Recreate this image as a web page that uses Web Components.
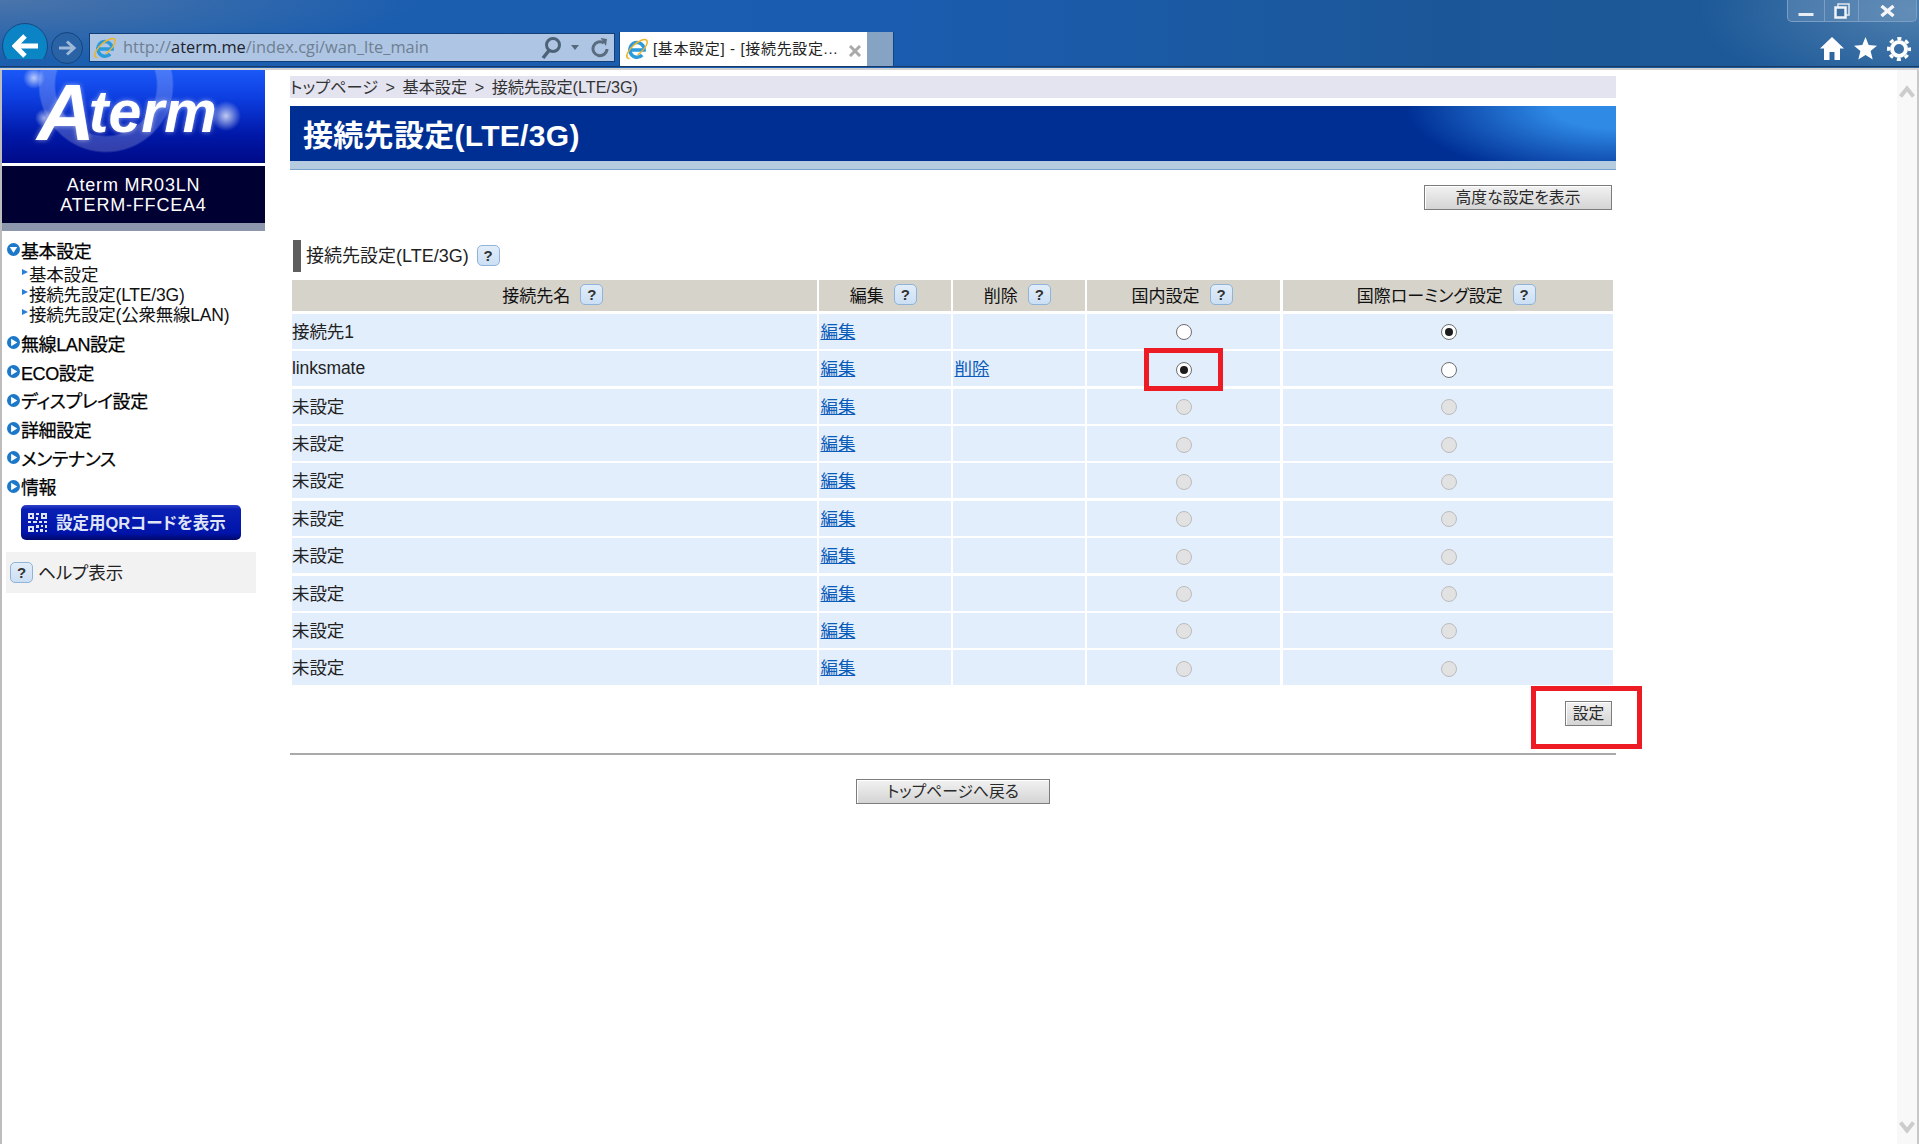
<!DOCTYPE html>
<html lang="ja">
<head>
<meta charset="utf-8">
<title>接続先設定(LTE/3G)</title>
<style>
  html, body { margin: 0; padding: 0; background: #fff; }
  body {
    width: 1919px; height: 1144px; overflow: hidden;
    font-family: "Liberation Sans", "Noto Sans CJK JP", sans-serif;
    font-feature-settings: "palt";
    color: #222;
  }
</style>
</head>
<body>
<ie-chrome></ie-chrome>
<aterm-page>
  <side-menu slot="side">
    <menu-item open>基本設定</menu-item>
    <sub-list>
      <sub-item>基本設定</sub-item>
      <sub-item>接続先設定(LTE/3G)</sub-item>
      <sub-item>接続先設定(公衆無線LAN)</sub-item>
    </sub-list>
    <menu-item>無線LAN設定</menu-item>
    <menu-item>ECO設定</menu-item>
    <menu-item>ディスプレイ設定</menu-item>
    <menu-item>詳細設定</menu-item>
    <menu-item>メンテナンス</menu-item>
    <menu-item>情報</menu-item>
  </side-menu>
  <main-pane>
    <crumb-bar>トップページ &gt; 基本設定 &gt; 接続先設定(LTE/3G)</crumb-bar>
    <title-bar>接続先設定(LTE/3G)</title-bar>
    <button-row align="end" top="15"><push-button w="188">高度な設定を表示</push-button></button-row>
    <section-head>接続先設定(LTE/3G)</section-head>
    <conn-table>
      <conn-head></conn-head>
      <conn-row intl="on">接続先1</conn-row>
      <conn-row latin del dom="on" intl="off">linksmate</conn-row>
      <conn-row dom="dis" intl="dis">未設定</conn-row>
      <conn-row dom="dis" intl="dis">未設定</conn-row>
      <conn-row dom="dis" intl="dis">未設定</conn-row>
      <conn-row dom="dis" intl="dis">未設定</conn-row>
      <conn-row dom="dis" intl="dis">未設定</conn-row>
      <conn-row dom="dis" intl="dis">未設定</conn-row>
      <conn-row dom="dis" intl="dis">未設定</conn-row>
      <conn-row dom="dis" intl="dis">未設定</conn-row>
    </conn-table>
    <button-row align="end" top="16"><push-button w="47">設定</push-button></button-row>
    <rule-line></rule-line>
    <button-row align="center" top="24"><push-button w="194">トップページへ戻る</push-button></button-row>
    <red-mark style="left:854px;top:278px;width:79px;height:43px"></red-mark>
    <red-mark style="left:1241px;top:616px;width:111px;height:63px"></red-mark>
  </main-pane>
</aterm-page>

<script>
// small base class, every element just sets tmpl
class Base extends HTMLElement {
  connectedCallback() {
    if (this.shadowRoot) return
    let frag = document.createRange().createContextualFragment(this.tmpl())
    this.attachShadow({ mode: 'open' }).appendChild(frag)
  }
}

const ieLogo = `<svg viewBox="0 0 24 24" width="24" height="24" style="overflow:visible">
  <path d="M4.600 13h14.600a7.200 7.400 0 1 0-2 5" fill="none" stroke="#2b9bdc" stroke-width="3.400"/>
  <ellipse cx="12" cy="12" rx="13" ry="5" transform="rotate(-42 12 12)" fill="none" stroke="#efb32c" stroke-width="1.500" stroke-dasharray="30 9 40" stroke-dashoffset="12"/>
</svg>`

class IeChrome extends Base {
  tmpl() { return `
  <style>
    :host { display: flex; flex-direction: column; height: 70px; box-sizing: border-box;
      border-bottom: 2px solid #d2d2d2;
      background:
        radial-gradient(ellipse 420px 60px at 0 0, #4a74aa 0, rgba(74,116,170,0) 100%),
        radial-gradient(ellipse 220px 90px at 1919px 10px, #4f7fae 0, rgba(79,127,174,0) 100%),
        linear-gradient(90deg, #1c5fae 0, #1a5cb0 45%, #1b5798 75%, #1d5a98 100%); }
    .top { height: 32px; display: flex; justify-content: flex-end; padding-right: 2px; flex: none; }
    .win { display: flex; height: 22px; box-sizing: border-box; border: 1px solid #7c9ec4; border-top: 0;
      border-radius: 0 0 5px 5px; background: rgba(255,255,255,.12); }
    .win div { display: flex; align-items: center; justify-content: center; height: 100%; }
    .win div + div { border-left: 1px solid #7c9ec4; }
    .row { height: 34px; display: flex; align-items: flex-start; position: relative;
      border-bottom: 1px solid #183c66; flex: none; padding-left: 2px; }
    .back { width: 46px; height: 46px; margin-top: -9px; flex: none; border-radius: 50%; box-sizing: border-box;
      border: 1px solid #134b80; background: linear-gradient(#0b82c6, #0a88c4); display: flex; align-items: center; justify-content: center;
      clip-path: inset(0 0 10px 0); }
    .fwd { width: 32px; height: 32px; margin: 0 0 0 3px; flex: none; border-radius: 50%; box-sizing: border-box;
      border: 1px solid #13457f; background: #2a62a6; display: flex; align-items: center; justify-content: center; }
    .addr { width: 526px; height: 29px; margin: 1px 0 0 6px; flex: none; box-sizing: border-box;
      border: 1px solid #123f78; background: #aec6e4; display: flex; align-items: center; padding-left: 3px; }
    .url { font: 16.400px "Open Sans", "Noto Sans", sans-serif; color: #6f7f92; margin: -2px 0 0 6px; flex: 1; white-space: nowrap; }
    .url b { font-weight: 400; color: #20242c; }
    .addr svg { flex: none; }
    .tab { width: 248px; height: 34px; margin-left: 4px; flex: none; box-sizing: border-box; background: #fff;
      border-left: 1px solid #0f4688; display: flex; align-items: center; padding-left: 5px; }
    .tab span { font-size: 15px; color: #222; margin: -4px 0 0 4px; flex: 1; white-space: nowrap; letter-spacing: .65px; }
    .stub { width: 27px; height: 34px; flex: none; background: #87a3c4; border-right: 1px solid #0f4688; box-sizing: border-box; }
    .tools { margin-left: auto; display: flex; gap: 10px; padding: 5px 8px 0 0; }
  </style>
  <div class="top"><div class="win">
    <div style="width:36px"><svg width="16" height="22" viewBox="0 0 16 22"><rect x="0.500" y="13" width="15" height="3" fill="#e8edf3"/></svg></div>
    <div style="width:33px"><svg width="18" height="18" viewBox="0 0 18 18"><rect x="5" y="2" width="11" height="11" fill="none" stroke="#dfe6ee" stroke-width="1.500"/><rect x="2.500" y="5.500" width="10" height="10" fill="#3d6fa3" stroke="#f0f3f7" stroke-width="2.500"/></svg></div>
    <div style="width:57px"><svg width="15" height="12" viewBox="0 0 15 12"><path d="M1.500 1l12 10M13.500 1l-12 10" stroke="#f4f6f9" stroke-width="3.400"/></svg></div>
  </div></div>
  <div class="row">
    <div class="back"><svg width="26" height="24" viewBox="0 0 26 24"><path d="M13 2L3 12l10 10M3 12h23" fill="none" stroke="#fff" stroke-width="5"/></svg></div>
    <div class="fwd"><svg width="18" height="16" viewBox="0 0 18 16"><path d="M9 1.500L16 8l-7 6.500M16 8H1" fill="none" stroke="#9db8d8" stroke-width="3"/></svg></div>
    <div class="addr">
      ${ieLogo}
      <div class="url">http://<b>aterm.me</b>/index.cgi/wan_lte_main</div>
      <svg width="22" height="24" viewBox="0 0 22 24" style="margin-right:9px"><circle cx="13" cy="9" r="6.500" fill="none" stroke="#4c6277" stroke-width="3"/><path d="M9 14.500L3 22" stroke="#4c6277" stroke-width="3.500"/></svg>
      <svg width="8" height="5" viewBox="0 0 8 5" style="margin-right:12px"><path d="M0 0h8L4 5z" fill="#56697c"/></svg>
      <svg width="18" height="22" viewBox="0 0 18 22" style="margin-right:5px"><path d="M13 6a7 7 0 1 0 3 6" fill="none" stroke="#5a6d80" stroke-width="3"/><path d="M9.500 1l6.500 1-1 7z" fill="#5a6d80"/></svg>
    </div>
    <div class="tab">${ieLogo}<span>[基本設定] - [接続先設定...</span>
      <svg width="14" height="12" viewBox="0 0 14 12" style="margin:3px 5px 0 0"><path d="M2 1l10 10M12 1L2 11" stroke="#aaa" stroke-width="3"/></svg></div>
    <div class="stub"></div>
    <div class="tools">
      <svg width="24" height="23" viewBox="0 0 24 23"><path d="M12 0l12 11.500h-4V23h-5.500v-8h-5v8H4V11.500H0z" fill="#fff"/></svg>
      <svg width="23" height="23" viewBox="0 0 24 24"><path d="M12 0l3.300 8.400 8.700.6-6.700 5.700 2.200 8.800L12 18.700 4.500 23.500l2.200-8.800L0 9l8.700-.6z" fill="#fff"/></svg>
      <svg width="24" height="24" viewBox="0 0 24 24"><circle cx="12" cy="12" r="7" fill="none" stroke="#fff" stroke-width="4"/><circle cx="12" cy="12" r="10.500" fill="none" stroke="#fff" stroke-width="3" stroke-dasharray="4.120 4.120" stroke-dashoffset="2"/></svg>
    </div>
  </div>` }
}

class AtermPage extends Base {
  tmpl() { return `
  <style>
    :host { display: flex; height: 1074px; }
    .side { width: 263px; flex: none; border-left: 2px solid #bdbdbd; }
    .main { width: 1326px; margin-left: 25px; flex: none; }
    .fill { flex: 1; }
    .bar { width: 20px; flex: none; background: #f8f8f8; display: flex; flex-direction: column; justify-content: space-between; align-items: center; padding: 15px 0 10px 0; box-sizing: content-box; }
    .edge { width: 2px; flex: none; background: #c8c8c8; }
    svg { display: block; }
  </style>
  <div class="side"><slot name="side"></slot></div>
  <div class="main"><slot></slot></div>
  <div class="fill"></div>
  <div class="bar">
    <svg width="16" height="13" viewBox="0 0 16 13"><path d="M1.500 11.500L8 3.500l6.500 8" fill="none" stroke="#ccc" stroke-width="4"/></svg>
    <svg width="16" height="13" viewBox="0 0 16 13"><path d="M1.500 1.500L8 9.500l6.500-8" fill="none" stroke="#ccc" stroke-width="4"/></svg>
  </div>
  <div class="edge"></div>` }
}

class SideMenu extends Base {
  tmpl() { return `
  <style>
    :host { display: block; }
    .logo { height: 93px; display: flex; align-items: flex-end; padding: 0 0 21px 35px; box-sizing: border-box;
      color: #fff; font: italic bold 59px/1 "Liberation Sans", sans-serif; letter-spacing: 0;
      text-shadow: 0 0 5px rgba(255,255,255,.55);
      background:
        radial-gradient(circle at 32px 8px, rgba(255,255,255,.7) 0, rgba(255,255,255,0) 11px),
        radial-gradient(circle at 42px 48px, rgba(255,255,255,.6) 0, rgba(255,255,255,0) 9px),
        radial-gradient(circle at 224px 46px, rgba(255,255,255,.75) 0, rgba(255,255,255,0) 15px),
        radial-gradient(circle at 104px 15px, rgba(255,255,255,0) 50px, rgba(255,255,255,.2) 52px, rgba(255,255,255,.2) 66px, rgba(255,255,255,0) 68px),
        linear-gradient(#1b58f8 0, #0d3ee0 30%, #0018a8 70%, #000a88 100%); }
    .logo span { font-size: 80px; letter-spacing: -6px; line-height: 59px; }
    .model { height: 57px; margin-top: 3px; background: #000033; color: #fff; box-sizing: border-box; padding-top: 10px;
      text-align: center; font-size: 18px; line-height: 19.500px; letter-spacing: .8px; white-space: nowrap; }
    .band { height: 8px; background: #8c97ae; }
    .items { padding-top: 4.200px; }
    .qr { margin: 4.400px 0 0 19px; width: 220px; height: 35px; box-sizing: border-box; border-radius: 5px;
      background: linear-gradient(#3344c8 0, #0a1fb4 12%, #0014aa 80%, #00086a 100%);
      display: flex; align-items: center; padding-left: 7px; color: #dfe4f6; font-size: 16.500px; font-weight: bold; gap: 9px; white-space: nowrap; }
    .qr span { margin-top: -2px; }
    .help { margin: 12px 0 0 4px; width: 250px; height: 41px; background: #f2f2f2; display: flex; align-items: center;
      padding-left: 4px; box-sizing: border-box; gap: 5px; font-size: 17.500px; color: #222; }
    .help span { margin-top: -2px; }
  </style>
  <div class="logo"><span>A</span>term</div>
  <div class="model">Aterm MR03LN<br>ATERM-FFCEA4</div>
  <div class="band"></div>
  <div class="items"><slot></slot></div>
  <div class="qr">
    <svg width="19" height="19" viewBox="0 0 19 19" fill="#dfe4f6"><path d="M0 0h6v6H0zM2 2v2h2V2zM13 0h6v6h-6zM15 2v2h2V2zM0 13h6v6H0zM2 15v2h2v-2zM8 0h3v2H8zM8 4h2v3H8zM0 8h3v2H0zM5 8h4v2H5zM11 8h3v2h-3zM16 8h3v2h-3zM8 12h3v3H8zM13 12h2v2h-2zM17 12h2v3h-2zM8 17h2v2H8zM12 16h3v3h-3zM17 17h2v2h-2z"/></svg>
    <span>設定用QRコードを表示</span>
  </div>
  <div class="help"><help-icon></help-icon><span>ヘルプ表示</span></div>` }
}

class MenuItem extends Base {
  tmpl() {
    let tri = this.hasAttribute('open')
      ? '<path d="M2.500 3.800h7L6 9z" fill="#fff"/>'
      : '<path d="M3.800 2.500L9.500 6l-5.700 3.500z" fill="#fff"/>'
    return `
  <style>
    :host { display: flex; align-items: center; height: 28.700px; padding-left: 4.500px; color: #000; font-size: 18px; letter-spacing: -.4px;
      -webkit-text-stroke: .25px #000; white-space: nowrap; }
    svg { margin-right: 1.500px; flex: none; }
  </style>
  <svg width="13" height="13" viewBox="0 0 12 12"><circle cx="6" cy="6" r="6" fill="#1c78c8"/>${tri}</svg><slot></slot>`
  }
}

class SubList extends Base {
  tmpl() { return `<style>:host { display: block; margin-bottom: 4.700px; }</style><slot></slot>` }
}

class SubItem extends Base {
  tmpl() { return `
  <style>
    :host { display: flex; align-items: center; height: 20px; padding-left: 20px; color: #111; font-size: 17.500px; white-space: nowrap; letter-spacing: -.2px; }
    i { width: 0; height: 0; border-left: 6px solid #2a80d8; border-top: 3.500px solid transparent; border-bottom: 3.500px solid transparent; margin: -4px 1px 0 0; }
  </style><i></i><slot></slot>` }
}

class HelpIcon extends Base {
  tmpl() { return `
  <style>
    :host { display: inline-flex; width: 23px; height: 21px; box-sizing: border-box; align-items: center; justify-content: center; flex: none;
      background: linear-gradient(#e2edf9, #cbdff4); border: 1.500px solid #90b3da; border-radius: 5px;
      font: bold 15px "Liberation Sans", sans-serif; color: #333; -webkit-text-stroke: 0; letter-spacing: 0; }
  </style>?` }
}

class MainPane extends Base {
  tmpl() { return `<style>:host { display: block; position: relative; padding-top: 6px; }</style><slot></slot>` }
}

class CrumbBar extends Base {
  tmpl() { return `
  <style>:host { display: flex; align-items: center; height: 22px; box-sizing: border-box; padding-bottom: 2px; background: #e4e4f0; color: #333; font-size: 16.200px; white-space: nowrap; word-spacing: 3px; }</style><slot></slot>` }
}

class TitleBar extends Base {
  tmpl() { return `
  <style>
    :host { display: block; margin-top: 8px; }
    .t { height: 55px; box-sizing: border-box; padding: 0 0 2px 13px; display: flex; align-items: center; color: #fff;
      font-size: 30px; font-weight: bold; white-space: nowrap; letter-spacing: .3px;
      background:
        radial-gradient(ellipse 210px 75px at 100% 0, #2f8ae6 0, #2f8ae6 30%, rgba(47,138,230,0) 100%),
        #002f94; }
    .b { height: 8px; background: #b5cce0; border-bottom: 1px solid #7da2cc; box-sizing: content-box; }
  </style>
  <div class="t"><slot></slot></div><div class="b"></div>` }
}

class ButtonRow extends Base {
  tmpl() {
    let a = this.getAttribute('align') == 'center' ? 'center' : 'flex-end'
    let pad = a == 'center' ? 0 : 4
    return `<style>:host { display: flex; justify-content: ${a}; padding-right: ${pad}px; margin-top: ${this.getAttribute('top')}px; }</style><slot></slot>`
  }
}

class PushButton extends Base {
  tmpl() { return `
  <style>
    :host { display: flex; width: ${this.getAttribute('w')}px; box-sizing: border-box; height: 25px; align-items: center; justify-content: center;
      border: 1.500px solid #7c7c7c; background: linear-gradient(#f2f2f2, #d4d4d4); box-shadow: inset 1px 1px 0 #fff;
      color: #2a2a2a; font-size: 15.800px; white-space: nowrap; padding-bottom: 2.500px; }
  </style><slot></slot>` }
}

class SectionHead extends Base {
  tmpl() { return `
  <style>
    :host { display: flex; align-items: center; margin: 30px 0 8px 3px; height: 32px; color: #222; font-size: 18px; white-space: nowrap; }
    i { width: 8px; height: 32px; background: #5e5e5e; margin-right: 5px; flex: none; }
    span { margin-top: -4px; }
    help-icon { margin: -2px 0 0 8px; }
  </style><i></i><span><slot></slot></span><help-icon></help-icon>` }
}

class ConnTable extends Base {
  tmpl() { return `
  <style>
    :host { display: grid; margin-left: 2px; width: 1321px; row-gap: 2.450px;
      --cols: 524.500px 131.500px 131.500px 193px 330.500px; }
  </style><slot></slot>` }
}

class ConnHead extends Base {
  tmpl() {
    let names = ['接続先名', '編集', '削除', '国内設定', '国際ローミング設定']
    let cells = names.map(n => `<div>${n}<help-icon></help-icon></div>`).join('')
    return `
  <style>
    :host { display: grid; grid-template-columns: var(--cols); column-gap: 2.500px; height: 31px; margin-bottom: .5px; }
    div { background: #d6d3ca; display: flex; align-items: center; justify-content: center; gap: 10px; color: #111; font-size: 17px; white-space: nowrap; box-sizing: border-box; padding: 0 3px 2px 0; }
  </style>${cells}`
  }
}

class ConnRow extends Base {
  tmpl() {
    let del = this.hasAttribute('del') ? '<a>削除</a>' : ''
    let dom = this.getAttribute('dom') || 'off'
    let intl = this.getAttribute('intl') || 'off'
    let namePad = this.hasAttribute('latin') ? 0 : 2
    return `
  <style>
    :host { display: grid; grid-template-columns: var(--cols); column-gap: 2.500px; height: 34.950px; }
    div { background: #e3eefd; display: flex; align-items: center; color: #222; font-size: 17.500px; white-space: nowrap; letter-spacing: -.1px; box-sizing: border-box; }
    .n { padding-bottom: ${namePad}px; }
    .l { padding: 0 0 2px 1.500px; }
    .c { justify-content: center; padding-top: 2px; }
    .i { padding-left: 2px; }
    a { color: #0b5cb8; text-decoration: underline; }
  </style>
  <div class="n"><slot></slot></div>
  <div class="l"><a>編集</a></div>
  <div class="l">${del}</div>
  <div class="c"><radio-dot state="${dom}"></radio-dot></div>
  <div class="c i"><radio-dot state="${intl}"></radio-dot></div>`
  }
}

class RadioDot extends Base {
  tmpl() {
    let s = this.getAttribute('state')
    let bg = s == 'dis' ? '#e2e2e2' : '#fff'
    let bd = s == 'dis' ? '#bcbcbc' : '#6e6e6e'
    let dot = s == 'on' ? '<i></i>' : ''
    return `
  <style>
    :host { display: flex; width: 16px; height: 16px; box-sizing: border-box; border-radius: 50%; border: 1.500px solid ${bd}; background: ${bg}; align-items: center; justify-content: center; }
    i { width: 8px; height: 8px; border-radius: 50%; background: #1c1c1c; }
  </style>${dot}`
  }
}

class RuleLine extends Base {
  tmpl() { return `<style>:host { display: block; height: 2px; background: #a9a9a9; margin-top: 27px; }</style>` }
}

class RedMark extends Base {
  tmpl() { return `<style>:host { display: block; position: absolute; box-sizing: border-box; border: 5px solid #ed1c24; }</style>` }
}

customElements.define('ie-chrome', IeChrome)
customElements.define('aterm-page', AtermPage)
customElements.define('side-menu', SideMenu)
customElements.define('menu-item', MenuItem)
customElements.define('sub-list', SubList)
customElements.define('sub-item', SubItem)
customElements.define('help-icon', HelpIcon)
customElements.define('main-pane', MainPane)
customElements.define('crumb-bar', CrumbBar)
customElements.define('title-bar', TitleBar)
customElements.define('button-row', ButtonRow)
customElements.define('push-button', PushButton)
customElements.define('section-head', SectionHead)
customElements.define('conn-table', ConnTable)
customElements.define('conn-head', ConnHead)
customElements.define('conn-row', ConnRow)
customElements.define('radio-dot', RadioDot)
customElements.define('rule-line', RuleLine)
customElements.define('red-mark', RedMark)
</script>
</body>
</html>
